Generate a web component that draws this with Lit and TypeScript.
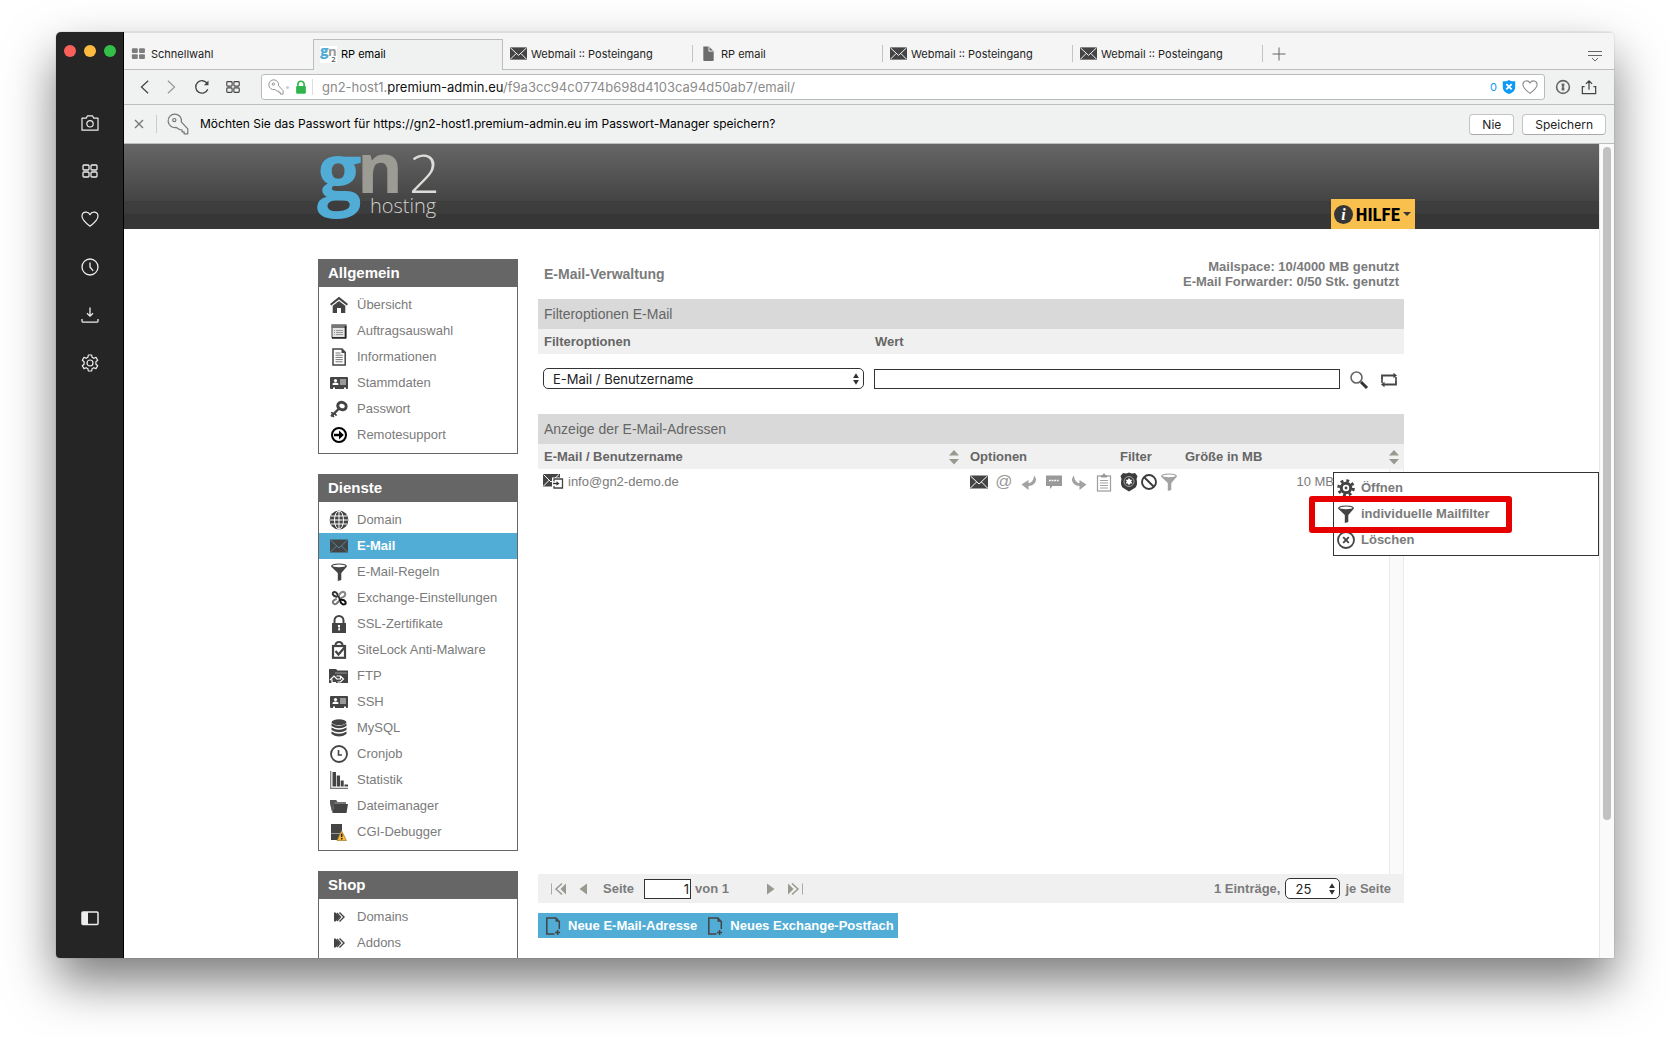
import { LitElement, html, svg, css, TemplateResult, SVGTemplateResult } from "lit";
import { customElement, property } from "lit/decorators.js";

/* Icon artwork, drawn on an 18 x 18 grid */
const ICONS: Record<string, SVGTemplateResult> = {
  camera: svg`<g fill="none" stroke="currentColor" stroke-width="1.2" stroke-linejoin="round"><path d="M1 4.2h4.2l1.3-2.4h5l1.3 2.4H17v12H1z"/><circle cx="9" cy="9.8" r="3.2"/></g>`,
  speeddial: svg`<g fill="none" stroke="currentColor" stroke-width="1.3"><rect x="2" y="3" width="6" height="5" rx="1"/><rect x="10" y="3" width="6" height="5" rx="1"/><rect x="2" y="10" width="6" height="5" rx="1"/><rect x="10" y="10" width="6" height="5" rx="1"/></g>`,
  heart: svg`<path d="M9 16.2C3.500 12 1 9.500 1 6.200 1 1.500 7 .8 9 4.600 11 .8 17 1.500 17 6.200 17 9.500 14.500 12 9 16.200z" fill="none" stroke="currentColor" stroke-width="1.200" stroke-linejoin="round"/>`,
  history: svg`<g fill="none" stroke="currentColor" stroke-width="1.3"><circle cx="9" cy="9" r="8"/><path d="M9 4.500V9l3.200 3.800"/></g>`,
  download: svg`<path d="M9 1.500v8.500M6 7.200l3 3 3-3M1 13v2q0 1.200 1.200 1.200h13.600Q17 16.200 17 15v-2" fill="none" stroke="currentColor" stroke-width="1.300"/>`,
  settings: svg`<g fill="none" stroke="currentColor" stroke-width="1.200" stroke-linejoin="round"><path d="M7.300 1h3.400l.4 2.300 1.700 1 2.200-.9 1.700 2.900-1.800 1.500v2.400l1.800 1.500-1.700 2.900-2.200-.9-1.700 1-.4 2.300H7.300l-.4-2.300-1.700-1-2.200.9-1.700-2.900 1.800-1.500V7.800L1.300 6.300 3 3.400l2.200.9 1.700-1z"/><circle cx="9" cy="9" r="3"/></g>`,
  panel: svg`<rect x="1" y="3" width="16" height="12.500" rx="1" fill="none" stroke="currentColor" stroke-width="1.500"/><path d="M1 3h6v12.500H1z" fill="currentColor"/>`,
  tiles: svg`<g fill="#7d7d7d"><rect x="2" y="3.500" width="6.200" height="5" rx="1"/><rect x="9.600" y="3.500" width="6.200" height="5" rx="1"/><rect x="2" y="9.800" width="6.200" height="5" rx="1"/><rect x="9.600" y="9.800" width="6.200" height="5" rx="1"/></g>`,
  gn: svg`<rect width="18" height="18" fill="#fff"/><g font-family="Open Sans, sans-serif"><text x="0" y="11" font-size="15" font-weight="800" fill="#51add6">g</text><text x="8.500" y="10.500" font-size="14" font-weight="700" fill="#9c9c94">n</text><text x="12" y="17" font-size="8" font-weight="600" fill="#555">2</text></g>`,
  page: svg`<path d="M3.500 1.500h6l5 5V16q0 1-1 1h-9q-1 0-1-1z" fill="#6c6c6c"/><path d="M9.500 1.500v5h5" fill="none" stroke="#f5f5f5"/>`,
  plus: svg`<path d="M9 2.500v13M2.500 9h13" stroke="currentColor" fill="none"/>`,
  tabmenu: svg`<path d="M2 5.500h14M2 9.500h14M6 12l3 3 3-3" stroke="currentColor" fill="none"/>`,
  back: svg`<path d="M12.500 2L5 9l7.500 7" fill="none" stroke="currentColor" stroke-width="1.400"/>`,
  forward: svg`<path d="M5.500 2L13 9l-7.500 7" fill="none" stroke="currentColor" stroke-width="1.400"/>`,
  reload: svg`<path d="M15.500 11.500A7 7 0 1 1 14.800 5" fill="none" stroke="currentColor" stroke-width="1.500"/><path d="M16.300 1.800v5.200h-5.200z" fill="currentColor"/>`,
  key: svg`<g fill="none" stroke="currentColor" stroke-width="1"><path d="M7.600 11.800A5.500 5.500 0 1 1 11.800 7.500L17 13v4h-3v-1.600h-1.700v-1.700h-1.700z" stroke-linejoin="round"/><circle cx="6" cy="5.800" r="1.300"/></g>`,
  lockgreen: svg`<path d="M5.500 9V6a3.500 3.500 0 0 1 7 0v3" fill="none" stroke="#2fb54a" stroke-width="1.800"/><rect x="3.500" y="8" width="11" height="8.500" rx="1.200" fill="#2fb54a"/>`,
  shield: svg`<path d="M9 1c2 1.400 4.500 1.600 7 1.600V9c0 4-3 6.500-7 8-4-1.500-7-4-7-8V2.600C4.500 2.600 7 2.400 9 1z" fill="#0d9bf5"/><path d="M6 5.800l6 6M12 5.800l-6 6" stroke="#fff" stroke-width="2"/>`,
  onepass: svg`<circle cx="9" cy="9" r="7.200" fill="none" stroke="#666" stroke-width="1.800"/><path d="M7.500 5h3v3l-.8.900.8.900V13h-3v-3l.8-.9-.8-.9z" fill="#666"/>`,
  share: svg`<path d="M9 12V2M5.500 5.500L9 2l3.500 3.500M4 8.500H1.500v8h15v-8H14" fill="none" stroke="currentColor" stroke-width="1.400"/>`,
  close: svg`<path d="M5 5l8 8M13 5l-8 8" fill="none" stroke="currentColor" stroke-width="1.400"/>`,
  home: svg`<path d="M9 .8L0 8l1.200 1.400L9 3.600l7.800 5.800L18 8z" fill="currentColor"/><path d="M9 5l6.300 4.700V17H11v-5H7v5H2.700V9.700z" fill="currentColor"/>`,
  windowlist: svg`<rect x="2" y="3" width="14" height="12.500" fill="#e4e4e4" stroke="#444"/><path d="M1.500 2.500h15V6h-15z" fill="#777"/><path d="M15.500 4v12H2" fill="none" stroke="#222" stroke-width="1.600"/><path d="M4 8.500h1M6 8.500h7M4 10.500h1M6 10.500h7M4 12.500h1M6 12.500h7" stroke="#999"/>`,
  doc: svg`<path d="M3 1h9l3.200 3.200V17H3z" fill="#fff" stroke="currentColor" stroke-width="1.500"/><path d="M5.500 5h5M5.500 7.200h7.200M5.500 9.400h7.200M5.500 11.600h7.200M5.500 13.800h7.200" stroke="#777"/><path d="M11.500 1v4h4z" fill="currentColor"/>`,
  card: svg`<path d="M0 4q0-1 1-1h16q1 0 1 1v10q0 1-1 1h-1v-1.500h-2V15H5v-1.500H3V15H1q-1 0-1-1z" fill="currentColor"/><circle cx="5.500" cy="6.600" r="1.600" fill="#fff"/><path d="M2.600 11V9.600q1.500-1 2.900-1t2.900 1V11z" fill="#fff"/><rect x="10" y="5" width="6" height="6" fill="#999"/>`,
  passkey: svg`<ellipse cx="12" cy="6" rx="4.300" ry="3.600" transform="rotate(25 12 6)" fill="none" stroke="currentColor" stroke-width="3"/><path d="M9 8.500L1.200 16.500" stroke="currentColor" stroke-width="2.400" fill="none"/><path d="M4 13l2.600 2.600M1.500 14.500l2.500 2.500M1 12.500l2.500 1" stroke="currentColor" stroke-width="1.600"/>`,
  arrowcircle: svg`<circle cx="9" cy="9" r="7" fill="none" stroke="#000" stroke-width="2"/><path d="M4 7.800h5V4.500L13.800 9 9 13.500v-3.300H4z" fill="#000"/>`,
  globe: svg`<circle cx="9" cy="9" r="9.400" fill="currentColor"/><g fill="none" stroke="#fff" stroke-width="1"><ellipse cx="9" cy="9" rx="4.500" ry="9"/><path d="M9 0v18M0 9h18M1 5h16M1 13h16"/></g>`,
  mail: svg`<rect x="0" y="2.500" width="18" height="13" fill="#444"/><path d="M.5 3L9 11l8.500-8M.5 15l6-6M17.500 15l-6-6" fill="none" stroke="var(--mail-line, #fff)" stroke-width="1"/>`,
  funnel: svg`<path d="M1 3.500q0-3 8-3t8 3L11.300 10v7L7.800 18V10z" fill="currentColor"/><ellipse cx="9" cy="2.900" rx="6.500" ry="1.300" fill="#fff"/>`,
  exchange: svg`<g fill="none" stroke-width="2" stroke-linecap="round"><path d="M6.500 7.800L4 6.800Q1.800 4.500 3.500 3.300 5.500 2.500 7 4.500L9.300 9" stroke="#333"/><path d="M9 6l1.800-2.200Q13 2 15 3.800 16 6 13.500 8L11 9" stroke="#888"/><path d="M10.500 10.500l3.500.7q2.500 1.800 1.300 3.800-2.300 1.300-4-.8L9.500 11" stroke="#111"/><path d="M8.500 12.500l-2 2.200q-2 1.200-3.500-.7-.8-2 1.500-3.200l1.500-.6" stroke="#777"/></g>`,
  lock: svg`<path d="M4.500 8V5.500a4.500 4.500 0 0 1 9 0V8" fill="none" stroke="currentColor" stroke-width="2"/><rect x="2" y="8" width="14" height="10" fill="currentColor"/><path d="M8 10h2v2H8zM8.300 12.500h1.600V15.500H8.300z" fill="#fff"/>`,
  sitelock: svg`<path d="M5.500 4.500q0-3.500 3.500-3.500t3.500 3.500" fill="none" stroke="currentColor" stroke-width="2"/><rect x="3" y="5" width="12" height="11.800" fill="#fff" stroke="currentColor" stroke-width="2.200"/><path d="M5.500 10l3 3.500L14.500 6.500" fill="none" stroke="currentColor" stroke-width="2.200"/>`,
  ftp: svg`<path d="M-1 2h7l1.500 1.500H18V16H-1z" fill="currentColor"/><path d="M5 6h12" stroke="#999"/><path d="M0 13l4-4 3.500 3.500M2 12.500v3h4M6.500 9h4l3 3-3 3h-3M10.500 9v3h-3" fill="none" stroke="#fff" stroke-width="1.200"/>`,
  database: svg`<g fill="currentColor"><ellipse cx="9" cy="3.200" rx="7.500" ry="2.900"/><path d="M1.500 4.500q7.500 4.500 15 0v2.600q-7.500 4.500-15 0zM1.500 8.500q7.500 4.500 15 0v2.600q-7.500 4.500-15 0zM1.500 12.500q7.500 4.500 15 0v2.600q-7.500 5-15 0z"/></g>`,
  clock: svg`<circle cx="9" cy="9" r="8" fill="#fff" stroke="currentColor" stroke-width="1.800"/><path d="M8.500 5v5h3.500" fill="none" stroke="currentColor" stroke-width="1.600"/>`,
  chart: svg`<path d="M.7 0v17.300H18" fill="none" stroke="#777" stroke-width="1.200"/><path d="M2.500 1h3.500v14.500H2.500zM6.700 4.500H10v11H6.700zM10.700 9.500h3v6h-3zM14.500 13.500H18v2h-3.500z" fill="currentColor"/>`,
  folder: svg`<path d="M0 3h6l1.500 2H16v2H4L2.500 16 0 6z" fill="#777"/><path d="M4 7h14l-1.500 9H2.500z" fill="currentColor"/><path d="M0 3h6l1.300 2H5L2 15 0 6z" fill="#555"/>`,
  debug: svg`<path d="M1 1h11v8l-2.500 3v5H1z" fill="currentColor"/><path d="M1 10.500h10" stroke="#999"/><path d="M11.500 7.500l5 10H7z" fill="#f7b733" stroke="#8a6d1c" stroke-width=".6"/><path d="M11.700 10.800v3.200M11.700 15v1.400" stroke="#222" stroke-width="1.500"/>`,
  chevrons: svg`<path d="M4 4.500l1.500 0L10 9l-4.500 4.500H4z" fill="currentColor"/><path d="M9.500 4.500L14 9l-4.500 4.500M7 5l3.500 4L7 13" fill="none" stroke="currentColor" stroke-width="1.400"/>`,
  search: svg`<circle cx="6.500" cy="6.500" r="5.500" fill="none" stroke="#666" stroke-width="1.600"/><path d="M11 11l6 6" stroke="#333" stroke-width="3"/>`,
  swap: svg`<path d="M2 8V4.500h12M16 10v3.500H4" fill="none" stroke="#444" stroke-width="1.800"/><path d="M13.500 1.800L17 4.500l-3.500 2.700zM4.500 10.800L1 13.500l3.500 2.700z" fill="#444"/><path d="M2 7.500V12M16 6v4.500" stroke="#444" stroke-width="1.600"/>`,
  reply: svg`<path d="M14 2.500q4 4.500 0 8.500-2 1.800-5.500 2V17L1.500 11.500l7-4.500v3.300q5-1 5.500-7.800z" fill="#a2a2a2"/>`,
  redirect: svg`<path d="M4 2.500q-4 4.500 0 8.500 2 1.800 5.500 2V17l7-5.500-7-4.500v3.300q-5-1-5.500-7.800z" fill="#a2a2a2"/>`,
  chat: svg`<path d="M1 2.500h16V13H7.500L5 16v-3H1z" fill="#999"/><path d="M4 7.500h10" stroke="#fff" stroke-width="1.400" stroke-dasharray="1.800 .8"/>`,
  clipboard: svg`<rect x="2.500" y="3" width="13" height="15" fill="#fff" stroke="#a2a2a2" stroke-width="1.300"/><path d="M6 4.500V2h1.500L9 0l1.500 2H12v2.500z" fill="#999"/><path d="M5 7.500h8M5 10h8M5 12.500h8M5 15h8" stroke="#a2a2a2"/>`,
  badge: svg`<path d="M3 0q3 1 6-.5Q12 1 15 0l2.500 3-1 3q1.500 5-1 8.500L9 18.500l-6.500-4Q0 11 1.500 6l-1-3z" fill="#3c3c3c"/><circle cx="9" cy="8.500" r="5" fill="none" stroke="#bbb" stroke-width=".8"/><path d="M9 4.800l1.100 1.900h2.200l-1.100 1.900 1.100 1.900h-2.200L9 12.400l-1.100-1.900H5.700l1.100-1.900-1.100-1.900h2.200z" fill="#fff"/>`,
  ban: svg`<circle cx="9" cy="9" r="7" fill="none" stroke="#3c3c3c" stroke-width="1.900"/><path d="M4 4l10 10" stroke="#3c3c3c" stroke-width="1.900"/>`,
  mailuser: svg`<rect x="0" y="1" width="17" height="12.500" fill="#444"/><path d="M.5 1.500L8 9l8-7.500M.5 13l6-6" fill="none" stroke="#fff"/><path d="M9 4.500h11.500V16H9z" fill="#fff"/><path d="M11 8.500V6h8.500v9H11v-2" fill="none" stroke="#444" stroke-width="1.300"/><path d="M10 10.500h4" stroke="#333" stroke-width="1.400"/><path d="M13.500 8.200l3 2.300-3 2.300z" fill="#333"/>`,
  gear: svg`<g fill="none" stroke="#444"><circle cx="9" cy="9" r="4.700" stroke-width="3"/><circle cx="9" cy="9" r="7.300" stroke-width="3" stroke-dasharray="2.870 2.870"/></g><circle cx="9" cy="9" r="1.400" fill="#444"/>`,
  remove: svg`<circle cx="9" cy="9" r="8" fill="#fff" stroke="#444" stroke-width="1.800"/><path d="M6.200 6.200l5.600 5.600M11.800 6.200l-5.600 5.600" stroke="#444" stroke-width="1.900"/>`,
  newpage: svg`<path d="M10.500 17H2.800V1h9l3.500 3.500V12" fill="none" stroke="#444" stroke-width="1.500"/><path d="M11.500 1v3.700h3.800z" fill="#444"/><path d="M13.600 13v5M11.100 15.500h5" stroke="#444" stroke-width="1.500"/>`,
  first: svg`<path d="M1.500 3.500v11" stroke="#aaa"/><path d="M16 3.500v11L10.500 9z" fill="#999990"/><path d="M12 3.500L6 9l6 5.500" fill="none" stroke="#999990" stroke-width="1.500"/>`,
  last: svg`<path d="M16.500 3.500v11" stroke="#aaa"/><path d="M2 3.500v11L7.500 9z" fill="#999990"/><path d="M6 3.500L12 9l-6 5.500" fill="none" stroke="#999990" stroke-width="1.500"/>`,
  prev: svg`<path d="M13 3.500v11L5.500 9z" fill="#999990"/>`,
  next: svg`<path d="M5 3.500v11L12.500 9z" fill="#999990"/>`,
  sort: svg`<path d="M9 2l5 5.500H4zM4 11h10l-5 5.500z" fill="#999990"/>`,
  updown: svg`<path d="M9 2.500l3.300 5.300H5.700zM5.700 10.200h6.600L9 15.500z" fill="#333"/>`,
  info: svg`<circle cx="9" cy="9" r="9" fill="#363636"/><text x="9" y="14" text-anchor="middle" font-family="Liberation Serif, serif" font-size="15" font-weight="700" font-style="italic" fill="#fff">i</text>`,
};

@customElement("ui-icon")
export class UiIcon extends LitElement {
  @property() name = "";
  static styles = css`
    :host { display: inline-flex; flex: none; width: 18px; height: 18px; }
    svg { width: 100%; height: 100%; overflow: visible; }
  `;
  render() {
    return html`<svg viewBox="0 0 18 18" aria-hidden="true">${ICONS[this.name]}</svg>`;
  }
}

interface MenuGroup {
  title: string;
  items: [string, string][];
}

const GROUPS: MenuGroup[] = [
  {
    title: "Allgemein",
    items: [
      ["home", "Übersicht"], ["windowlist", "Auftragsauswahl"], ["doc", "Informationen"],
      ["card", "Stammdaten"], ["passkey", "Passwort"], ["arrowcircle", "Remotesupport"],
    ],
  },
  {
    title: "Dienste",
    items: [
      ["globe", "Domain"], ["mail", "E-Mail"], ["funnel", "E-Mail-Regeln"],
      ["exchange", "Exchange-Einstellungen"], ["lock", "SSL-Zertifikate"],
      ["sitelock", "SiteLock Anti-Malware"], ["ftp", "FTP"], ["card", "SSH"],
      ["database", "MySQL"], ["clock", "Cronjob"], ["chart", "Statistik"],
      ["folder", "Dateimanager"], ["debug", "CGI-Debugger"],
    ],
  },
  { title: "Shop", items: [["chevrons", "Domains"], ["chevrons", "Addons"]] },
];

@customElement("side-menu")
export class SideMenu extends LitElement {
  static styles = css`
    :host { display: flex; flex-direction: column; gap: 20px; width: 200px; flex: none; }
    .group { border: 1px solid #666; border-top: 0; }
    .title { margin: 0 -1px; padding: 0 10px; background: #666; color: #fff; font-size: 15px; line-height: 28px; font-weight: 700; }
    .list { margin: 0; padding: 5px 0; list-style: none; }
    .link { display: flex; align-items: center; gap: 9px; box-sizing: border-box; height: 26px; padding: 0 11px 2px; color: #7b7b7b; font-size: 13px; text-decoration: none; }
    .link ui-icon { margin-top: 2px; color: #444; }
    .active { background: #51add6; color: #fff; font-weight: 700; --mail-line: #4f87a3; }
  `;
  render() {
    return GROUPS.map(
      (g) => html`<nav class="group" aria-label=${g.title}>
        <h2 class="title">${g.title}</h2>
        <ul class="list">
          ${g.items.map(([icon, label]) => html`<li>
            <a class="link ${label === "E-Mail" ? "active" : ""}" href="#"><ui-icon name=${icon}></ui-icon>${label}</a>
          </li>`)}
        </ul>
      </nav>`
    );
  }
}

@customElement("mail-admin")
export class MailAdmin extends LitElement {
  static styles = css`
    :host { display: block; flex: 1; min-width: 0; color: #7b7b7b; font-size: 13px; }
    * { box-sizing: border-box; }
    button { display: inline-flex; align-items: center; border: 0; padding: 0; margin: 0; background: none; font: inherit; color: inherit; }
    .head { display: flex; justify-content: space-between; height: 40px; padding: 0 5px 0 6px; font-weight: 700; }
    .head-title { margin: 0; font-size: 14px; line-height: 30px; }
    .quota { margin: 0; text-align: right; line-height: 15px; }
    .bar { margin: 0; padding: 0 6px; background: #d9d9d9; color: #666; font-size: 14px; font-weight: 400; line-height: 30px; }
    .cols { display: flex; background: #f0f0f0; color: #666; font-weight: 700; line-height: 25px; padding: 0 6px; }
    .col-field { flex: 0 0 331px; }
    .filter { display: flex; align-items: flex-end; gap: 10px; padding: 14px 6px 25px 5px; }
    .picker { display: grid; align-items: center; }
    .picker > * { grid-area: 1 / 1; }
    .picker ui-icon { justify-self: end; width: 16px; height: 16px; pointer-events: none; }
    .select { appearance: none; width: 100%; height: 21px; border: 1px solid #333; border-radius: 5px; background: #fff; padding: 0 9px; color: #222; font: 13px Inter, sans-serif; }
    .picker-field { flex: 0 0 321px; }
    .picker-size { width: 55px; }
    .input { height: 20px; border: 1px solid #333; border-radius: 0; background: #fff; padding: 0 1px; color: #222; font: 13px Inter, sans-serif; }
    .input-value { flex: 1; min-width: 0; }
    .input-page { width: 47px; text-align: right; }
    .tools { display: flex; gap: 12px; }
    .body { position: relative; min-height: 430px; display: flex; }
    .gutter { flex: none; width: 15px; margin: 25px 0 0 -15px; background: #fafafa; border: 1px solid #eaeaea; border-width: 0 1px; }
    .table { flex: 1; align-self: flex-start; width: 100%; border-collapse: collapse; table-layout: fixed; }
    .c-mail { width: 426px; }
    .c-opt { width: 150px; }
    .c-filter { width: 65px; }
    .th { height: 25px; padding: 0 5px 0 6px; background: #f0f0f0; color: #666; text-align: left; font-weight: 700; }
    .th-in { display: flex; justify-content: space-between; align-items: center; }
    .th-in ui-icon { margin-right: -4px; }
    .td { height: 25px; padding: 0 0 0 6px; }
    .td-size { padding-right: 70px; text-align: right; }
    .addr { display: flex; align-items: center; gap: 7px; margin-left: -1px; }
    .icons { display: flex; align-items: center; gap: 7px; }
    .icons-tight { gap: 2px; }
    .at { width: 18px; justify-content: center; color: #999; font-size: 17px; line-height: 18px; }
    .dim { color: #a2a2a2; }
    .menu { position: absolute; left: 795px; top: 28px; width: 266px; margin: 0; padding: 2px 3px; list-style: none; border: 1px solid #333; background: #fff; }
    .menu-item { display: flex; align-items: center; gap: 6px; height: 26px; width: 100%; padding-bottom: 2px; font-weight: 700; }
    .menu-item ui-icon { margin-top: 2px; color: #444; }
    .marker { position: absolute; left: 771px; top: 52px; width: 203px; height: 37px; border: 6px solid #e60000; border-radius: 3px; pointer-events: none; }
    .pager { display: flex; justify-content: space-between; align-items: center; height: 29px; padding: 0 13px 0 12px; background: #f0f0f0; font-weight: 700; }
    .grp { display: flex; align-items: center; gap: 5px; }
    .grp-nav { gap: 6px; }
    .page-no { display: flex; align-items: center; gap: 10px; padding: 0 27px 0 5px; }
    .page-of { margin-left: -6px; }
    .actions { display: inline-flex; margin-top: 10px; height: 25px; padding: 0 4px 0 6px; gap: 9px; background: #51add6; color: #fff; }
    .action { gap: 6px; font-weight: 700; }
  `;

  private iconButton(name: string, label: string, cls = ""): TemplateResult {
    return html`<button class=${cls} aria-label=${label}><ui-icon name=${name}></ui-icon></button>`;
  }

  render() {
    return html`
      <div class="head">
        <h1 class="head-title">E-Mail-Verwaltung</h1>
        <p class="quota">Mailspace: 10/4000 MB genutzt<br />E-Mail Forwarder: 0/50 Stk. genutzt</p>
      </div>
      <h2 class="bar">Filteroptionen E-Mail</h2>
      <div class="cols">
        <label class="col-field" for="field">Filteroptionen</label>
        <label for="value">Wert</label>
      </div>
      <div class="filter">
        <div class="picker picker-field">
          <select class="select" id="field"><option>E-Mail / Benutzername</option></select>
          <ui-icon name="updown"></ui-icon>
        </div>
        <input class="input input-value" id="value" type="text" />
        <div class="tools">${this.iconButton("search", "Suchen")}${this.iconButton("swap", "Zurücksetzen")}</div>
      </div>
      <h2 class="bar">Anzeige der E-Mail-Adressen</h2>
      <div class="body">
        <table class="table">
          <colgroup><col class="c-mail" /><col class="c-opt" /><col class="c-filter" /><col /></colgroup>
          <thead>
            <tr>
              <th class="th"><div class="th-in">E-Mail / Benutzername ${this.iconButton("sort", "Sortieren")}</div></th>
              <th class="th">Optionen</th>
              <th class="th">Filter</th>
              <th class="th"><div class="th-in">Größe in MB ${this.iconButton("sort", "Sortieren")}</div></th>
            </tr>
          </thead>
          <tbody>
            <tr>
              <td class="td"><div class="addr"><ui-icon name="mailuser"></ui-icon>info@gn2-demo.de</div></td>
              <td class="td"><div class="icons">
                ${this.iconButton("mail", "Postfach")}
                <button class="at" aria-label="Alias">@</button>
                ${this.iconButton("reply", "Weiterleitung")}
                ${this.iconButton("chat", "Autoresponder")}
                ${this.iconButton("redirect", "Umleitung")}
                ${this.iconButton("clipboard", "Notiz")}
              </div></td>
              <td class="td"><div class="icons icons-tight">
                ${this.iconButton("badge", "Virenschutz")}
                ${this.iconButton("ban", "Spamfilter")}
                ${this.iconButton("funnel", "Mailfilter", "dim")}
              </div></td>
              <td class="td td-size">10 MB</td>
            </tr>
          </tbody>
        </table>
        <div class="gutter"></div>
        <ul class="menu">
          <li><button class="menu-item"><ui-icon name="gear"></ui-icon>Öffnen</button></li>
          <li><button class="menu-item"><ui-icon name="funnel"></ui-icon>individuelle Mailfilter</button></li>
          <li><button class="menu-item"><ui-icon name="remove"></ui-icon>Löschen</button></li>
        </ul>
        <div class="marker"></div>
      </div>
      <div class="pager">
        <div class="grp grp-nav">
          ${this.iconButton("first", "Erste Seite")}${this.iconButton("prev", "Vorherige Seite")}
          <div class="page-no">
            <label for="page">Seite</label>
            <input class="input input-page" id="page" type="text" value="1" />
            <span class="page-of">von 1</span>
          </div>
          ${this.iconButton("next", "Nächste Seite")}${this.iconButton("last", "Letzte Seite")}
        </div>
        <div class="grp">
          <label for="size">1 Einträge,</label>
          <div class="picker picker-size">
            <select class="select" id="size"><option>25</option></select>
            <ui-icon name="updown"></ui-icon>
          </div>
          <span>je Seite</span>
        </div>
      </div>
      <div class="actions">
        <button class="action"><ui-icon name="newpage"></ui-icon>Neue E-Mail-Adresse</button>
        <button class="action"><ui-icon name="newpage"></ui-icon>Neues Exchange-Postfach</button>
      </div>
    `;
  }
}

const RAIL: [string, string][] = [
  ["camera", "Schnappschuss"], ["speeddial", "Schnellwahl"], ["heart", "Lesezeichen"],
  ["history", "Verlauf"], ["download", "Downloads"], ["settings", "Einstellungen"],
];

const TABS: [string, string][] = [
  ["tiles", "Schnellwahl"], ["gn", "RP email"], ["mail", "Webmail :: Posteingang"],
  ["page", "RP email"], ["mail", "Webmail :: Posteingang"], ["mail", "Webmail :: Posteingang"],
];

@customElement("app-root")
export class AppRoot extends LitElement {
  static styles = css`
    :host { display: flex; box-sizing: border-box; height: 100vh; padding: 32px 56px 80px; background: #fff; font-family: "Liberation Sans", Arial, sans-serif; overflow: hidden; }
    * { box-sizing: border-box; }
    button { display: inline-flex; align-items: center; justify-content: center; border: 0; padding: 0; margin: 0; background: none; font: inherit; color: inherit; }
    .window { display: flex; flex: 1; min-width: 0; border-radius: 5px 5px 0 4px; overflow: hidden; }
    .frame { display: flex; flex: 1; min-width: 0; border-radius: 5px 5px 0 4px; box-shadow: 0 0 1px rgba(0, 0, 0, 0.5), 0 24px 50px rgba(0, 0, 0, 0.52); }
    .rail { display: flex; flex-direction: column; align-items: center; flex: none; width: 68px; background: #252525; border-right: 1px solid #000; color: #eee; }
    .lights { display: flex; gap: 8px; margin: 13px 0 42px; }
    .light { width: 12px; height: 12px; border-radius: 50%; background: #fc605b; }
    .light-min { background: #fdbc40; }
    .light-max { background: #34c048; }
    .rail-btn { width: 48px; height: 48px; }
    .rail-end { margin-top: auto; margin-bottom: 16px; }
    .main { display: flex; flex-direction: column; flex: 1; min-width: 0; background: #fff; font-family: Inter, Roboto, sans-serif; }
    .tabs { display: flex; align-items: flex-end; height: 38px; flex: none; background: #f5f5f5; border-top: 1px solid #ddd; box-shadow: inset 0 -1px #bdbdbd; color: #222; font-size: 11px; }
    .tab { display: flex; align-items: center; gap: 4px; flex: 0 1 190px; height: 31px; padding: 0 7px 2px; color: inherit; text-decoration: none; white-space: nowrap; }
    .tab:first-child { flex-basis: 189px; padding-left: 6px; }
    .tab ui-icon { width: 17px; height: 17px; }
    .tab-sep { border-right: 1px solid transparent; border-image: linear-gradient(transparent 22%, #c4c4c4 22%, #c4c4c4 74%, transparent 74%) 1; }
    .tab-on { padding-left: 6px; background: #f0f2f1; border: 1px solid #bdbdbd; border-bottom: 0; color: #000; }
    .tab-add { height: 31px; width: 32px; padding-bottom: 2px; color: #666; }
    .tab-menu { height: 31px; margin: 0 10px 0 auto; color: #666; }
    .tools { display: flex; align-items: center; height: 35px; flex: none; padding: 0 17px 0 13px; gap: 10px; background: #f0f2f1; border-bottom: 1px solid #bdbdbd; color: #444; }
    .tools ui-icon { width: 16px; height: 16px; }
    .muted { color: #999; }
    .spaced { margin-left: 5px; }
    .url { display: flex; align-items: center; flex: 1; height: 26px; margin: 0 0 0 10px; padding: 0 6px; border: 1px solid #bbb; border-radius: 3px; background: #fff; color: #8b8b8b; font-size: 13px; }
    .url-key { color: #888; }
    .dot { width: 3px; height: 3px; border-radius: 50%; background: #ccc; margin: 0 4px 0 2px; }
    .url-text { flex: 1; margin-left: 3px; padding-left: 9px; border-left: 1px solid #ddd; }
    .host { color: #111; }
    .count { color: #0d9bf5; font-size: 11px; margin-right: 4px; }
    .url-shield { margin-right: 5px; }
    .tools-end { display: flex; gap: 10px; }
    .prompt { display: flex; align-items: center; height: 39px; flex: none; padding: 0 8px 0 6px; background: #f0f2f1; border-bottom: 1px solid #bdbdbd; color: #000; font-size: 12px; }
    .prompt-key { width: 22px; height: 22px; margin: 0 11px 0 10px; color: #777; }
    .prompt-x { padding-right: 8px; border-right: 1px solid #ccc; color: #777; }
    .prompt-text { flex: 1; margin: 0; padding-bottom: 2px; }
    .btn { height: 21px; margin-left: 8px; padding: 0 12px; border: 1px solid #c4c4c4; border-bottom-color: #aaa; border-radius: 4px; background: #fff; color: #222; }
    .view { display: flex; flex: 1; min-height: 0; }
    .page { flex: 1; min-width: 0; overflow: hidden; font-family: "Liberation Sans", Arial, sans-serif; }
    .scroll { flex: none; width: 15px; padding: 3px 3px 0 3px; background: #fafafa; border-left: 1px solid #e7e7e7; }
    .thumb { height: 83%; border-radius: 4px; background: #c1c1c1; }
    .banner { height: 85px; background: linear-gradient(#666, #444 57px, #3e3e3e 57px, #3c3c3c 70px, #363636 70px); }
    .wrap { display: flex; max-width: 1087px; margin: 0 auto; padding-right: 1px; }
    .banner .wrap { justify-content: space-between; height: 85px; }
    .logo { width: 120px; height: 85px; overflow: visible; font-family: "Open Sans", sans-serif; }
    .help { align-self: flex-end; gap: 3px; height: 30px; margin-right: -11px; padding: 0 4px 0 3px; background: #f9c04d; color: #000; font: 700 19px "Roboto Condensed", "Open Sans Condensed", "Liberation Sans Narrow", sans-serif; }
    .help ui-icon { width: 19px; height: 19px; }
    .caret { width: 0; border: 4px solid transparent; border-top-color: #363636; border-bottom: 0; }
    .columns { gap: 20px; padding-top: 30px; }
  `;

  render() {
    return html`
      <div class="frame"><div class="window">
        <aside class="rail">
          <div class="lights">
            <span class="light"></span><span class="light light-min"></span><span class="light light-max"></span>
          </div>
          ${RAIL.map(([icon, label]) => html`<button class="rail-btn" aria-label=${label}><ui-icon name=${icon}></ui-icon></button>`)}
          <button class="rail-btn rail-end" aria-label="Seitenleiste"><ui-icon name="panel"></ui-icon></button>
        </aside>
        <div class="main">
          <div class="tabs">
            ${TABS.map(([icon, label], i) => html`<a href="#" class="tab ${i === 1 ? "tab-on" : i > 1 ? "tab-sep" : ""}"><ui-icon name=${icon}></ui-icon>${label}</a>`)}
            <button class="tab-add" aria-label="Neuer Tab"><ui-icon name="plus"></ui-icon></button>
            <button class="tab-menu" aria-label="Tab-Menü"><ui-icon name="tabmenu"></ui-icon></button>
          </div>
          <div class="tools">
            <button aria-label="Zurück"><ui-icon name="back"></ui-icon></button>
            <button class="muted" aria-label="Vorwärts"><ui-icon name="forward"></ui-icon></button>
            <button class="spaced" aria-label="Neu laden"><ui-icon name="reload"></ui-icon></button>
            <button class="spaced" aria-label="Schnellwahl"><ui-icon name="speeddial"></ui-icon></button>
            <div class="url">
              <ui-icon class="url-key" name="key"></ui-icon><span class="dot"></span>
              <ui-icon name="lockgreen"></ui-icon>
              <span class="url-text">gn2-host1.<span class="host">premium-admin.eu</span>/f9a3cc94c0774b698d4103ca94d50ab7/email/</span>
              <span class="count">0</span>
              <ui-icon class="url-shield" name="shield"></ui-icon>
              <ui-icon name="heart"></ui-icon>
            </div>
            <div class="tools-end">
              <button aria-label="1Password"><ui-icon name="onepass"></ui-icon></button>
              <button aria-label="Teilen"><ui-icon name="share"></ui-icon></button>
            </div>
          </div>
          <div class="prompt">
            <button class="prompt-x" aria-label="Schließen"><ui-icon name="close"></ui-icon></button>
            <ui-icon class="prompt-key" name="key"></ui-icon>
            <p class="prompt-text">Möchten Sie das Passwort für https://gn2-host1.premium-admin.eu im Passwort-Manager speichern?</p>
            <button class="btn">Nie</button>
            <button class="btn">Speichern</button>
          </div>
          <div class="view">
            <div class="page">
              <header class="banner">
                <div class="wrap">
                  <svg class="logo" viewBox="0 0 120 85" role="img" aria-label="gn2 hosting">
                    <text x="-1" y="56" font-size="79" font-weight="700" fill="#51add6">g</text>
                    <text x="39" y="49" font-size="70" font-weight="700" fill="#9c9c94">n</text>
                    <text x="91" y="49" font-size="54" font-weight="300" fill="#dcdcd8">2</text>
                    <text x="52" y="69" font-size="20" font-weight="300" fill="#d0d0cc">hosting</text>
                  </svg>
                  <button class="help"><ui-icon name="info"></ui-icon>HILFE<span class="caret"></span></button>
                </div>
              </header>
              <div class="wrap columns">
                <side-menu></side-menu>
                <mail-admin></mail-admin>
              </div>
            </div>
            <div class="scroll"><div class="thumb"></div></div>
          </div>
        </div>
      </div></div>
    `;
  }
}
